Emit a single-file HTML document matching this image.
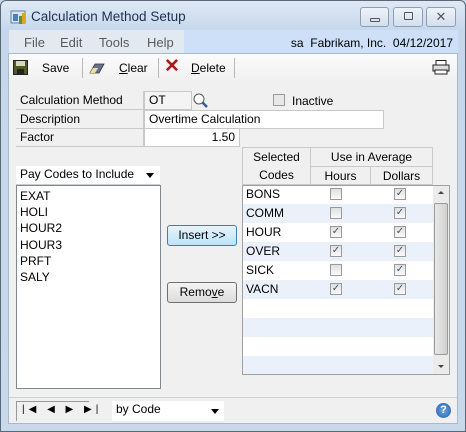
<!DOCTYPE html>
<html><head><style>
*{box-sizing:border-box;margin:0;padding:0}
body{width:466px;height:432px;overflow:hidden;font-family:"Liberation Sans",sans-serif;font-size:12px;color:#000;background:#c9d9ec;position:relative}
.a{position:absolute}
.win{left:0;top:0;width:466px;height:432px;border:1px solid #5a6878;border-radius:6px 6px 0 0;background:linear-gradient(#dfe9f5,#c6d7ec 30px,#c9d9ec)}
.body{left:8px;top:53px;width:450px;height:371px;background:#f0f0f0;border:1px solid #a9b8cb}
.lbl{border-bottom:1px solid #c9c9c9;border-right:1px solid #c9c9c9;height:19px;line-height:18px;padding-left:4px;font-size:12px}
.fld{background:#fff;border:1px solid #c8c8c8;height:19px;line-height:17px;padding-left:4px}
.wb{top:7px;height:20px;border:1px solid #8d9db2;border-radius:3px;background:linear-gradient(#eef3f9,#d3dfee)}
.sep{width:1px;height:20px;background:#b8b8b8;top:58px}
.row{left:243px;width:190px;height:19px;line-height:19px;padding-left:3px}
.cb{width:12px;height:12px;border:1px solid #9a9a9a;background:linear-gradient(#e0e0e0,#fafafa);font-size:10px;line-height:10px;text-align:center;color:#3c5070}
.hd{background:#f0f0f0;border-right:1px solid #c9c9c9;border-bottom:1px solid #c9c9c9;text-align:center;line-height:18px}
.btn{border:1px solid #707070;border-radius:3px;background:linear-gradient(#f4f4f4,#dcdcdc);text-align:center;line-height:18px}
</style></head><body>
<div class="a win"></div>
<svg class="a" style="left:10px;top:9px" width="17" height="17"><rect x="1" y="2" width="14" height="12" fill="#d8e4f0" stroke="#6b7f99"/><rect x="3" y="5" width="5" height="7" fill="#4a7fc0"/><rect x="9" y="7" width="5" height="8" fill="#4a9a3a"/><rect x="12" y="4" width="3" height="11" fill="#e0a020"/></svg>
<div class="a" style="left:31px;top:9px;font-size:13.5px;color:#1e3050">Calculation Method Setup</div>
<div class="a wb" style="left:360px;width:29px"><div class="a" style="left:9px;top:10px;width:10px;height:4px;border:1px solid #555;border-radius:1px"></div></div>
<div class="a wb" style="left:393px;width:30px"><div class="a" style="left:10px;top:4px;width:9px;height:8px;border:1px solid #555;border-radius:1px"></div></div>
<div class="a wb" style="left:426px;width:30px;text-align:center;line-height:17px;color:#555;font-size:13px">✕</div>
<div class="a" style="left:9px;top:30px;width:449px;height:23px;background:#e3e9f0"></div>
<div class="a" style="left:184px;top:30px;width:274px;height:23px;background:#cde0f7"></div>
<div class="a" style="left:24px;top:35px;font-size:13px;color:#5a5a5a">File</div>
<div class="a" style="left:60px;top:35px;font-size:13px;color:#5a5a5a">Edit</div>
<div class="a" style="left:99px;top:35px;font-size:13px;color:#5a5a5a">Tools</div>
<div class="a" style="left:147px;top:35px;font-size:13px;color:#5a5a5a">Help</div>
<div class="a" style="right:13px;top:36px;font-size:12px;color:#000;white-space:pre">sa  Fabrikam, Inc.  04/12/2017</div>
<div class="a body"></div>
<div class="a" style="left:9px;top:54px;width:448px;height:28px;background:linear-gradient(#fbfbfb,#f0f0f0)"></div>
<svg class="a" style="left:13px;top:60px" width="15" height="15"><rect x="0.5" y="0.5" width="14" height="14" fill="#4e5a2a" stroke="#222"/><rect x="3" y="1" width="9" height="5" fill="#d8d8c0"/><rect x="4" y="9" width="7" height="5" fill="#222"/></svg>
<div class="a" style="left:42px;top:61px">Save</div>
<div class="a sep" style="left:82px"></div>
<svg class="a" style="left:88px;top:60px" width="18" height="15"><path d="M2 13 L7 4 L16 4 L11 13 Z" fill="#6a7090" stroke="#333" stroke-width=".8"/><path d="M2 13 L5 8 L10 8 L7 13Z" fill="#f0e0a0"/></svg>
<div class="a" style="left:119px;top:61px"><u>C</u>lear</div>
<div class="a sep" style="left:158px"></div>
<div class="a" style="left:164px;top:56px;font-size:19px;color:#b01818;font-weight:bold;line-height:22px">✕</div>
<div class="a" style="left:191px;top:61px"><u>D</u>elete</div>
<div class="a sep" style="left:234px"></div>
<svg class="a" style="left:432px;top:60px" width="18" height="15"><rect x="4" y="0.5" width="10" height="5" fill="#fff" stroke="#222"/><rect x="1" y="5" width="16" height="6" fill="#ddd" stroke="#222"/><rect x="3" y="10" width="12" height="4" fill="#fff" stroke="#222"/></svg>

<div class="a lbl" style="left:16px;top:91px;width:128px">Calculation Method</div>
<div class="a lbl" style="left:16px;top:110px;width:128px">Description</div>
<div class="a lbl" style="left:16px;top:128px;width:128px">Factor</div>
<div class="a fld" style="left:144px;top:91px;width:48px;background:#f4f4f4">OT</div>
<svg class="a" style="left:192px;top:91px" width="17" height="18"><circle cx="7" cy="8" r="5" fill="#fff" stroke="#555"/><path d="M10.5 11.5 L15 16" stroke="#335a99" stroke-width="2.5"/></svg>
<div class="a cb" style="left:273px;top:94px;background:#e8e8e8"></div>
<div class="a" style="left:292px;top:94px">Inactive</div>
<div class="a fld" style="left:144px;top:110px;width:240px">Overtime Calculation</div>
<div class="a fld" style="left:144px;top:128px;width:96px;text-align:right;padding-right:4px">1.50</div>

<div class="a fld" style="left:16px;top:166px;width:144px;border:none;border-bottom:1px solid #ccc">Pay Codes to Include</div>
<div class="a" style="left:146px;top:173px;border-left:4px solid transparent;border-right:4px solid transparent;border-top:5px solid #000"></div>
<div class="a" style="left:16px;top:185px;width:145px;height:204px;background:#fff;border:1px solid #828790;padding:2px 3px;line-height:16.2px">EXAT<br>HOLI<br>HOUR2<br>HOUR3<br>PRFT<br>SALY</div>

<div class="a btn" style="left:167px;top:225px;width:70px;height:21px;border-color:#3c7fb1;background:linear-gradient(#e6f4fc,#bde3f7)">Insert &gt;&gt;</div>
<div class="a btn" style="left:167px;top:282px;width:70px;height:21px">Remo<u>v</u>e</div>

<div class="a" style="left:242px;top:147px;width:191px;height:38px;border-left:1px solid #c9c9c9;border-top:1px solid #c9c9c9"></div>
<div class="a hd" style="left:243px;top:148px;width:68px;height:37px;line-height:18px">Selected<br>Codes</div>
<div class="a hd" style="left:311px;top:148px;width:122px;height:19px">Use in Average</div>
<div class="a hd" style="left:311px;top:167px;width:60px;height:18px">Hours</div>
<div class="a hd" style="left:371px;top:167px;width:62px;height:18px">Dollars</div>
<div class="a" style="left:242px;top:185px;width:208px;height:190px;border:1px solid #a0a0a0;background:#fff"></div>
<div class="a" style="left:243px;top:204px;width:190px;height:19px;background:#eaf1fb"></div>
<div class="a" style="left:243px;top:242px;width:190px;height:19px;background:#eaf1fb"></div>
<div class="a" style="left:243px;top:280px;width:190px;height:19px;background:#eaf1fb"></div>
<div class="a" style="left:243px;top:318px;width:190px;height:19px;background:#eaf1fb"></div>
<div class="a" style="left:243px;top:356px;width:190px;height:18px;background:#eaf1fb"></div>
<div class="a row" style="top:185px">BONS</div>
<div class="a row" style="top:204px">COMM</div>
<div class="a row" style="top:223px">HOUR</div>
<div class="a row" style="top:242px">OVER</div>
<div class="a row" style="top:261px">SICK</div>
<div class="a row" style="top:280px">VACN</div>
<div class="a cb" style="left:330px;top:188px"></div><div class="a cb" style="left:394px;top:188px">✓</div>
<div class="a cb" style="left:330px;top:207px"></div><div class="a cb" style="left:394px;top:207px">✓</div>
<div class="a cb" style="left:330px;top:226px">✓</div><div class="a cb" style="left:394px;top:226px">✓</div>
<div class="a cb" style="left:330px;top:245px">✓</div><div class="a cb" style="left:394px;top:245px">✓</div>
<div class="a cb" style="left:330px;top:264px"></div><div class="a cb" style="left:394px;top:264px">✓</div>
<div class="a cb" style="left:330px;top:283px">✓</div><div class="a cb" style="left:394px;top:283px">✓</div>
<div class="a" style="left:433px;top:186px;width:16px;height:188px;background:#ebebeb"></div>
<div class="a" style="left:434px;top:203px;width:14px;height:152px;border:1px solid #9a9a9a;border-radius:2px;background:linear-gradient(90deg,#e8e8e8,#d0d0d0)"></div>
<div class="a" style="left:438px;top:191px;border-left:3px solid transparent;border-right:3px solid transparent;border-bottom:3px solid #444"></div>
<div class="a" style="left:438px;top:365px;border-left:3px solid transparent;border-right:3px solid transparent;border-top:3px solid #444"></div>

<div class="a" style="left:9px;top:397px;width:448px;height:1px;background:#d0d0d0"></div>
<div class="a" style="left:16px;top:401px;width:73px;height:20px;border-left:1px solid #999;border-top:1px solid #999"></div>
<div class="a" style="left:22px;top:404px;font-size:10px;letter-spacing:4px">|◀ ◀ ▶ ▶|</div>
<div class="a fld" style="left:112px;top:401px;width:112px;height:20px;border:none">by Code</div>
<div class="a" style="left:211px;top:409px;border-left:4px solid transparent;border-right:4px solid transparent;border-top:5px solid #000"></div>
<div class="a" style="left:436px;top:403px;width:15px;height:15px;border-radius:50%;background:radial-gradient(#6fa8e0,#1e5cb0);color:#fff;font-size:11px;font-weight:bold;text-align:center;line-height:15px">?</div>
</body></html>
